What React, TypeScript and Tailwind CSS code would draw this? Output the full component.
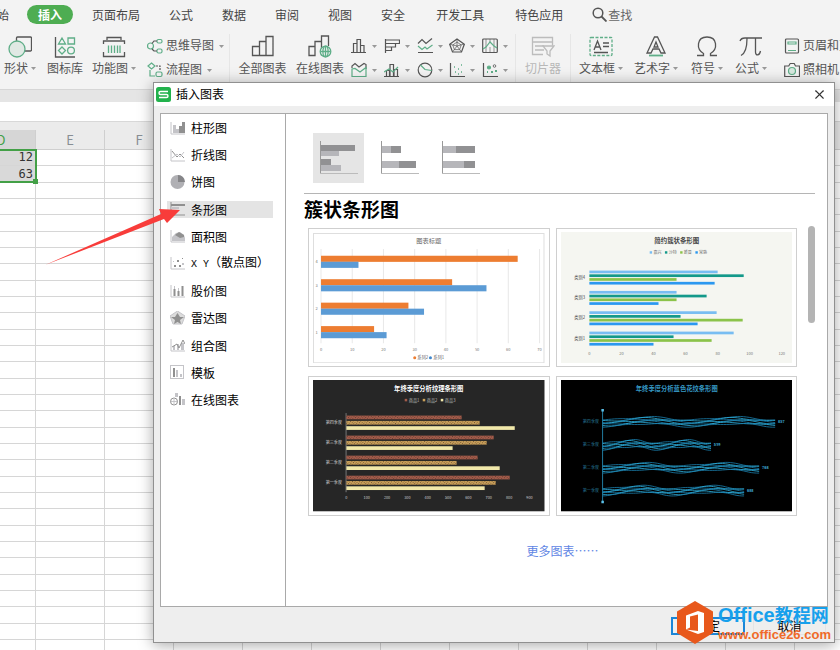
import React from "react";
import { X } from "lucide-react";

const G = "#5fae88";
const K = "#555555";

type Kids = { children: React.ReactNode };

function Big({ children }: Kids) {
  return (
    <svg width="24" height="24" viewBox="0 0 24 24" fill="none" stroke={K} strokeWidth="1.3">
      {children}
    </svg>
  );
}

function Small({ children }: Kids) {
  return (
    <svg width="16" height="16" viewBox="0 0 16 16" fill="none" stroke={K} strokeWidth="1.2" className="shrink-0">
      {children}
    </svg>
  );
}

function Caret() {
  return (
    <svg width="5" height="3" viewBox="0 0 5 3" className="shrink-0">
      <path d="M0 0h5L2.500 3z" fill="#999" />
    </svg>
  );
}

function Tool({ label, width, caret, dim, children }: Kids & { label: string; width: string; caret?: boolean; dim?: boolean }) {
  return (
    <button className={`flex shrink-0 flex-col items-center gap-px whitespace-nowrap ${width} ${dim ? "text-[#b8b8b8]" : "text-[#555]"}`}>
      {children}
      <span className="flex items-center gap-[3px] leading-[18px]">
        {label}
        {caret && <Caret />}
      </span>
    </button>
  );
}

function Row({ label, caret, children }: Kids & { label: string; caret?: boolean }) {
  return (
    <button className="flex h-6 items-center gap-[3px] whitespace-nowrap text-[#555]">
      {children}
      <span className="pb-[2px]">{label}</span>
      {caret && <span className="ml-[2px] flex"><Caret /></span>}
    </button>
  );
}

function Divider() {
  return <div className="h-[50px] w-px shrink-0 bg-[#e6e6e6]" />;
}

const chartIcons: { name: string; art: React.ReactNode }[] = [
  { name: "柱形图", art: <><path d="M0 14.500h15M2.500 14V5.500h3.500V14M6 14V1.500h3.500V14M9.500 7.500H13V14" /></> },
  { name: "条形图", art: <><path d="M1.500 1v14M1.500 2h14v3.500h-14M11.500 5.500V9h-10M7.500 9v3.500h-6" /></> },
  { name: "折线图", art: <><path d="M1 14.500h15M1 5.500l4-4 4 4 6-5" /><path d="M1 8l4 3.500L8 9l2 2 5.500-4" stroke={G} /></> },
  { name: "雷达图", art: <><path d="M8 1l7.300 5.300L12.500 14h-9L.700 6.300z" /><path d="M8 4l4.200 3-1.600 4.600H5.400L3.800 7zM8 1v7l7-2M8 8l4.500 6M8 8l-4.500 6M8 8L1 6.300" strokeWidth=".7" /></> },
  { name: "股价图", art: <><rect x=".700" y="1" width="14.600" height="13.500" rx="1" /><path d="M4 1v13M8 1v3M8 9v5M12 1v13" strokeWidth=".6" /><path d="M1 11l3-2 4-5 4 4 3 2" stroke={G} /></> },
  { name: "面积图", art: <><path d="M1 6V4l3-2.500L8 5l5-3.500 2 1V7" /><path d="M1 7v7.500h14V5.500L9 10 4 6.500z" stroke={G} /></> },
  { name: "组合图", art: <><path d="M0 14.500h15M2.500 14V8.500h3V14M6 14V2.500h3.500V14M10 14V7.500h3.500V14" /><path d="M0 10l5-3 4 3 5-5" stroke={G} /></> },
  { name: "饼图", art: <><circle cx="8" cy="8" r="6.800" /><path d="M3.500 3L8 7.500l6.800 1" stroke={G} /></> },
  { name: "散点图", art: <><path d="M1.500 1v13.500H16" /><path d="M5 5h1M9 7h1M12 3h1M6 10h1M12 10h1M9 12h1" stroke={G} strokeWidth="1.600" /></> },
  { name: "气泡图", art: <><path d="M1.500 1v13.500H16" /><circle cx="7" cy="5.500" r="1.500" fill={G} stroke={G} /><circle cx="12.500" cy="4" r="1.300" strokeWidth=".8" /><path d="M5 10h1M9 10h2M13 9h2" stroke={G} strokeWidth="2" /></> },
];

function Ribbon() {
  return (
    <header className="bg-[#f3f3f3]">
      <nav className="flex h-[29px] items-center gap-[29px] overflow-hidden whitespace-nowrap text-[#444]">
        <button className="-ml-[15px] -mr-[11px]">开始</button>
        <button className="-mr-[10px] h-[19px] rounded-full bg-[#4ead52] px-[11px] font-bold text-white">插入</button>
        <button>页面布局</button>
        <button>公式</button>
        <button>数据</button>
        <button>审阅</button>
        <button>视图</button>
        <button>安全</button>
        <button className="mx-[2px]">开发工具</button>
        <button>特色应用</button>
        <button className="flex items-center gap-px text-[#666]">
          <svg width="15" height="15" viewBox="0 0 15 15" fill="none" stroke="#555" strokeWidth="1.500">
            <circle cx="6" cy="6" r="4.800" />
            <path d="M9.500 9.500l5 5" strokeWidth="1.800" />
          </svg>
          查找
        </button>
      </nav>
      <div className="flex h-[61px] items-start overflow-hidden border-b border-[#d6d6d6] pt-[5px]">
        <Tool label="形状" width="w-[40px]" caret>
          <Big><rect x="8.500" y="3" width="15" height="14" rx="1" /><circle cx="9" cy="15" r="8" fill="#e0e9e4" stroke={G} /></Big>
        </Tool>
        <Tool label="图标库" width="w-[50px]">
          <Big><path d="M2.500 3v20H22" /><g stroke={G}><path d="M9 4l3.500 6h-7zM15 4h6.500v6H15zM9 13l3.500 3.500L9 20l-3.500-3.500z" /><circle cx="18" cy="16.500" r="3.400" /></g></Big>
        </Tool>
        <Tool label="功能图" width="w-[48px]" caret>
          <Big><path d="M5 6V3.500h14V6M1.500 10V7h21v3M1.500 18v4.500h21V18" /><path d="M6.500 11.500V19M9.500 11.500V19M12.500 11.500V19M15.500 11.500V19M18 11.500V19" stroke={G} /></Big>
        </Tool>
        <div className="flex w-[91px] shrink-0 flex-col items-start pl-[9px]">
          <Row label="思维导图" caret>
            <Small><g stroke={G}><circle cx="3.500" cy="8" r="3" /><rect x="10" y="1.500" width="5" height="3.500" rx="1.500" /><rect x="10" y="11" width="5" height="4" rx="1.500" /></g><path d="M5 5.500L7 3h3M5 11l2 2h3" /></Small>
          </Row>
          <Row label="流程图" caret>
            <Small><g stroke={G}><path d="M4.500 1l3.500 3-3.500 3L1 4z" /><rect x="9" y="10" width="6" height="4.500" rx="1.500" /><path d="M3 8v6h5" /></g><path d="M9 4h4v5" strokeDasharray="2 1" /></Small>
          </Row>
        </div>
        <Divider />
        <Tool label="全部图表" width="w-[65px]">
          <Big><path d="M1.500 21.500v-9h7v9zM8.500 21.500v-14h6.500v14zM15 21.500v-19h7v19z" /></Big>
        </Tool>
        <Tool label="在线图表" width="w-[50px]">
          <Big><path d="M1 21.500v-9h6v9zM7 21.500v-14h6.500v14M13.500 11v-9h7v10" /><g stroke={G}><circle cx="17.500" cy="17.500" r="5.300" fill="#f3f3f3" /><path d="M12.500 17.500h10M17.500 12.500v10" /><ellipse cx="17.500" cy="17.500" rx="2.600" ry="5.300" /></g></Big>
        </Tool>
        <div className="grid w-[170px] shrink-0 grid-cols-5 pl-[6px]">
          {chartIcons.map((c) => (
            <button key={c.name} aria-label={c.name} className="flex h-6 items-center gap-[5px]">
              <Small>{c.art}</Small>
              <Caret />
            </button>
          ))}
        </div>
        <Divider />
        <Tool label="切片器" width="w-[54px]" dim>
          <Big><g stroke="#bcbcbc"><path d="M12 20.500H1.500v-17h20v8M1.500 8h20M4 12h9M4 16h9" /><path d="M12 12h11l-4 5v5l-3-2v-3z" /></g></Big>
        </Tool>
        <Divider />
        <Tool label="文本框" width="w-[60px]" caret>
          <Big><rect x="1" y="3.500" width="22" height="18" rx="1" stroke={G} strokeDasharray="3 1.500" /><path d="M5 16l3.500-9L12 16M6 13h5M14 9h6M14 12.500h6M5 18.500h14" /></Big>
        </Tool>
        <Tool label="艺术字" width="w-[50px]" caret>
          <Big><path d="M10.500 3h3L21 19h-4l-2-4H9l-2 4H3zM12 8l-2 5h4z" /><path d="M5 21.500h14" stroke={G} strokeWidth="1.800" /></Big>
        </Tool>
        <Tool label="符号" width="w-[52px]" caret>
          <Big><path d="M2 21.500h6.500v-2C1 15 1.500 3 12 3s11 12 3.500 16.500v2H22" /></Big>
        </Tool>
        <Tool label="公式" width="w-[36px]" caret>
          <Big><path d="M1 7c1-3 3-3 5-3h17M8 4.500C8 12 7 19 2 21.500M16.500 4.500V18c0 4 4 4 5-1" /></Big>
        </Tool>
        <div className="flex shrink-0 flex-col items-start pl-[15px]">
          <Row label="页眉和页脚">
            <Small><rect x="1.500" y="1" width="13" height="14" rx="1" /><path d="M4 4h8v2H4zM4 12.500h8" stroke={G} /></Small>
          </Row>
          <Row label="照相机">
            <Small><path d="M.700 4h4l1.500-2.500h4L11.500 4h4v10.500H.700z" /><circle cx="8" cy="9" r="3.500" stroke={G} fill="#d7e8df" /></Small>
          </Row>
        </div>
      </div>
    </header>
  );
}

const columns = ["D", "E", "F", "G", "H", "I", "J", "K", "L", "M", "N", "O", "P"];
const rowHeights = ["h-[16px]", "h-[17px]", "h-[16px]"];
const values = ["12", "63"];

function Sheet() {
  return (
    <div className="relative bg-white">
      <div className="h-[12px] bg-[#e5e5e5]" />
      <div className="h-[20px] border-b border-[#d8d8d8] bg-white" />
      <div className="h-[8px] bg-[#ebebeb]" />
      <table className="-ml-[33px] w-[897px] table-fixed border-separate border-spacing-0">
        <thead>
          <tr>
            {columns.map((c) => (
              <th
                key={c}
                className={`h-[20px] border-b border-r border-[#cfcfcf] p-0 text-[13px] leading-[18px] font-normal ${c === "D" ? "bg-[#d6d6d6] text-[#43a047]" : "bg-[#ebebeb] text-[#888e94]"}`}
              >
                {c}
              </th>
            ))}
          </tr>
        </thead>
        <tbody className="font-['DejaVu_Sans_Mono',monospace] text-[12px] leading-[15px] text-[#333]">
          {Array.from({ length: 33 }, (_, r) => (
            <tr key={r}>
              {columns.map((c, i) => (
                <td key={c} className={`border-b border-r border-[#d6d6d6] p-0 pr-[2px] text-right ${rowHeights[r % 3]} ${i === 0 && r < 2 ? "bg-[#d9d9d9]" : ""}`}>
                  {i === 0 ? values[r] : ""}
                </td>
              ))}
            </tr>
          ))}
        </tbody>
      </table>
      <div className="absolute -left-[33px] top-[59px] h-[34px] w-[70px] border-2 border-[#43a047]">
        <div className="absolute -bottom-[3px] -right-[3px] size-[5px] bg-[#43a047]" />
      </div>
    </div>
  );
}

const A = "#c4c4c8";
const B = "#909090";

const kinds: { name: string; art: React.ReactNode; spaced?: boolean }[] = [
  { name: "柱形图", art: <><path d="M1 1v12h14" stroke={A} /><path d="M3 4h3v8H3zM6 8h3v4H6z" fill={A} /><path d="M9 5h3v7H9zM12 1h3v11h-3z" fill={B} /></> },
  { name: "折线图", art: <><path d="M1 1v12h14" stroke={A} /><path d="M2 3l5 6 3-3 4 4" stroke={B} /><path d="M2 10l5-4 3 3 4-5" stroke={A} /></> },
  { name: "饼图", art: <><circle cx="7.500" cy="7" r="7" fill="#b0b0b4" /><path d="M8 7V0a7 7 0 0 1 7 7z" fill="#858588" /></> },
  { name: "条形图", art: <><path d="M1 0v13h14" stroke={B} /><path d="M1 2h14v2H1z" fill={B} /><path d="M1 5h8v2H1zM1 9h6v2H1z" fill={A} /></> },
  { name: "面积图", art: <><path d="M1 1v12h14" stroke={A} /><path d="M2 12V8l4-4 4-1 4 3 1 3v3z" fill={A} /><path d="M5 6l4-3 5 3v2l-4 1z" fill={B} /></> },
  { name: "X Y（散点图）", spaced: true, art: <><path d="M1 1v12h14" stroke={A} /><path d="M4 9h2v2H4zM7 4h2v2H7zM12 2h1v1h-1zM9 9h2v2H9z" fill={B} /><path d="M3 5h1v1H3zM12 7h2v2h-2z" fill={A} /></> },
  { name: "股价图", art: <><path d="M1 1v12h14" stroke={A} /><path d="M4.500 5v7M8.500 7v5M12.500 2v10" stroke={B} strokeWidth="2" /><path d="M4.500 2v3M8.500 4v3" stroke={A} /></> },
  { name: "雷达图", art: <><path d="M7.500 0L15 5l-3 8H3L0 5z" fill="#dcdcdc" stroke={A} /><path d="M7.500 2L10 6l4 0-4 3 1 4-3.500-2L4 13l1-4-4-3h4z" fill={B} /></> },
  { name: "组合图", art: <><path d="M1 1v12h14" stroke={A} /><path d="M3 8h2v4H3zM7 6h2v6H7zM11 5h3v7h-3z" fill={A} /><path d="M2 9l5-3 2 4 4-8 2 4" stroke={B} /></> },
  { name: "模板", art: <><rect x=".500" y=".500" width="13" height="13" stroke={A} /><path d="M3 3h2v9H3z" fill={B} /><path d="M6 5h2v7H6zM10 9h2v3h-2z" fill={A} /></> },
  { name: "在线图表", art: <><circle cx="4" cy="9.500" r="3.500" stroke={B} /><path d="M1 9.500h6M4 6v7" stroke={A} /><path d="M5 1h3v4H5zM12 7h3v6h-3z" fill={A} /><path d="M9 4h2v9H9z" fill={B} /></> },
];

function Kinds() {
  return (
    <ul className="flex h-[289px] w-[124px] shrink-0 flex-col justify-between pl-[6px] text-black">
      {kinds.map((k) => (
        <li key={k.name}>
          <button className={`flex h-[17px] w-[106px] items-center gap-[6px] whitespace-nowrap pl-[3px] leading-[17px] ${k.name === "条形图" ? "bg-[#e4e4e4]" : ""}`}>
            <svg width="15" height="14" viewBox="0 0 15 14" fill="none" className="shrink-0">{k.art}</svg>
            {k.spaced ? (
              <span><span className="font-['Liberation_Mono',monospace] text-[10px]">X Y</span>（散点图）</span>
            ) : (
              <span>{k.name}</span>
            )}
          </button>
        </li>
      ))}
    </ul>
  );
}

const subtypes = [
  { name: "簇状条形图", light: [[0, 10, 18, 5], [0, 24, 20, 6]], dark: [[0, 4, 34, 6], [0, 18, 10, 6]] },
  { name: "堆积条形图", light: [[0, 5, 9, 7], [0, 20, 17, 7]], dark: [[9, 5, 10, 7], [17, 20, 17, 7]] },
  { name: "百分比堆积条形图", light: [[0, 5, 13, 7], [0, 20, 21, 7]], dark: [[13, 5, 19, 7], [21, 20, 11, 7]] },
];

function Subtypes() {
  return (
    <div className="flex gap-[10px] pl-[9px]">
      {subtypes.map((s, i) => (
        <button key={s.name} aria-label={s.name} className={`flex h-[50px] w-[51px] items-center justify-center ${i === 0 ? "bg-[#e5e5e5]" : ""}`}>
          <svg width="38" height="34" viewBox="0 0 38 34">
            {s.light.map((b, j) => <rect key={j} x={b[0] + 1} y={b[1]} width={b[2]} height={b[3]} fill="#b6b6ba" />)}
            {s.dark.map((b, j) => <rect key={j} x={b[0] + 1} y={b[1]} width={b[2]} height={b[3]} fill="#919193" />)}
            <path d="M.500 0v33" stroke="#999" />
            <path d="M0 32.500h38" stroke="#bbb" />
          </svg>
        </button>
      ))}
    </div>
  );
}

function Card({ name, children }: Kids & { name: string }) {
  return (
    <button aria-label={name} className="block border border-[#cfcfcf] bg-white px-[4px] py-[3px]">
      <svg viewBox="0 0 231 131" className="block w-full">{children}</svg>
    </button>
  );
}

function ClusteredChart() {
  const data = [[63, 12], [42, 53], [28, 33], [17, 21]];
  return (
    <Card name="图表标题">
      <rect x=".500" y="1.500" width="230" height="129" fill="#fff" stroke="#dedede" />
      <text x="115.500" y="10.500" fontSize="6.200" textAnchor="middle" fill="#666">图表标题</text>
      {[0, 1, 2, 3, 4, 5, 6, 7].map((t) => (
        <g key={t}>
          <path d={`M${8 + t * 31.15} 17v94`} stroke="#e2e2e2" strokeWidth=".8" />
          <text x={8 + t * 31.15} y="118.500" fontSize="4" textAnchor="middle" fill="#777">{t * 10}</text>
        </g>
      ))}
      {data.map((d, i) => (
        <g key={i}>
          <rect x="8" y={23.7 + i * 23.4} width={d[0] * 3.115} height="6.100" fill="#ed7d31" />
          <rect x="8" y={29.7 + i * 23.4} width={d[1] * 3.115} height="6.100" fill="#5b9bd5" />
          <text x="3.500" y={31.2 + i * 23.4} fontSize="4" textAnchor="middle" fill="#777">{4 - i}</text>
        </g>
      ))}
      <circle cx="101.500" cy="125.500" r="1.500" fill="#ed7d31" />
      <text x="104" y="127" fontSize="4.300" fill="#666">系列2</text>
      <circle cx="117.200" cy="125.500" r="1.500" fill="#3f86cc" />
      <text x="120" y="127" fontSize="4.300" fill="#666">系列1</text>
    </Card>
  );
}

function SimpleChart() {
  const colors = ["#78bdf2", "#13998a", "#8bc34a", "#2b98f0"];
  const data = [[128, 154, 87, 125], [87, 117, 87, 69], [127, 91, 153, 108], [144, 84, 122, 64]];
  const names = ["嘉兴", "沙特", "新晋", "常熟"];
  return (
    <Card name="简约簇状条形图">
      <rect width="231" height="131" fill="#f5f6f1" />
      <text x="115.500" y="10.500" fontSize="6.400" fontWeight="bold" textAnchor="middle" fill="#444">简约簇状条形图</text>
      {names.map((n, i) => (
        <g key={n}>
          <rect x={88.500 + i * 15.2} y="19.200" width="2.400" height="2.400" fill={colors[i]} />
          <text x={92.2 + i * 15.2} y="22" fontSize="4" fill="#666">{n}</text>
        </g>
      ))}
      {data.map((g, r) => (
        <g key={r}>
          {g.map((w, i) => <rect key={i} x="28.300" y={38.500 + r * 20.3 + i * 3.750} width={w} height="2.700" fill={colors[i]} />)}
          <text x="24" y={46.7 + r * 20.3} fontSize="4.200" textAnchor="end" fill="#444">{`类别${4 - r}`}</text>
        </g>
      ))}
      {[0, 20, 40, 60, 80, 100, 120].map((t) => (
        <text key={t} x={28.3 + t * 1.6} y="122.700" fontSize="4" textAnchor="middle" fill="#777">{t}</text>
      ))}
    </Card>
  );
}

const quarters = ["第四季度", "第三季度", "第二季度", "第一季度"];

function TextureChart() {
  const colors = ["#a35c4b", "#c9a05a", "#f1e8aa"];
  const data = [[115, 133, 168], [147, 140, 106], [131, 110, 153], [163, 149, 138]];
  return (
    <Card name="年终季度分析纹理条形图">
      <defs>
        <pattern id="dots" width="2" height="2" patternUnits="userSpaceOnUse" patternTransform="rotate(35)">
          <rect width=".900" height=".900" fill="#3a211b" opacity=".6" />
        </pattern>
      </defs>
      <rect width="231" height="131" fill="#262626" />
      <text x="115.500" y="11" fontSize="6.300" fontWeight="bold" textAnchor="middle" fill="#fff">年终季度分析纹理条形图</text>
      {colors.map((c, i) => (
        <g key={c}>
          <rect x={91.500 + i * 18} y="18.800" width="2.500" height="2.500" fill={c} />
          <text x={95.500 + i * 18} y="21.700" fontSize="4.200" fill="#bbb">{`商品${i + 1}`}</text>
        </g>
      ))}
      <path d="M33 33v79" stroke="#aaa" strokeWidth=".6" />
      {data.map((g, r) => (
        <g key={r}>
          {g.map((w, i) => (
            <g key={i}>
              <rect x="33.300" y={35.500 + r * 20 + i * 5.3} width={w} height="3.700" fill={colors[i]} />
              {i < 2 && <rect x="33.300" y={35.500 + r * 20 + i * 5.3} width={w} height="3.700" fill="url(#dots)" />}
            </g>
          ))}
          <text x="29" y={44 + r * 20} fontSize="4.100" textAnchor="end" fill="#ccc">{quarters[r]}</text>
        </g>
      ))}
      {[0, 1, 2, 3, 4, 5, 6, 7, 8, 9].map((t) => (
        <text key={t} x={33.3 + t * 20.3} y="118.300" fontSize="3.800" textAnchor="middle" fill="#ccc">{t * 100}</text>
      ))}
    </Card>
  );
}

// One strand of a woven bar: a sampled wave, kept inside the bar's ten units of height.
function strand(width: number, mid: number, n: number) {
  let d = "";
  for (let s = 0; s <= 60; s++) {
    const t = s / 60;
    const wave = Math.sin(t * Math.PI * 4 - 1.7) * 1.5 + Math.sin(t * Math.PI * 8 + n * 1.9) * 0.7;
    const y = mid - 3.3 + n * 1.1 - wave;
    d += `${s ? "L" : "M"}${(41.7 + t * width).toFixed(1)} ${y.toFixed(1)}`;
  }
  return d;
}

function WaveChart() {
  const data = [
    { w: 172, mid: 41.7, v: 857 },
    { w: 108, mid: 64.7, v: 539 },
    { w: 156, mid: 87.5, v: 768 },
    { w: 141, mid: 110.3, v: 688 },
  ];
  return (
    <Card name="年终季度分析蓝色花纹条形图">
      <rect width="231" height="131" fill="#000" />
      <text x="115.500" y="11" fontSize="6.300" fontWeight="bold" textAnchor="middle" fill="#3698c4">年终季度分析蓝色花纹条形图</text>
      <path d="M41.500 30v92" stroke="#2588b0" strokeWidth=".9" />
      <path d="M40.300 29h2.500v2.500h-2.500zM40.300 120.500h2.500v2.500h-2.500z" fill="#5cc0e8" />
      {data.map((b, r) => (
        <g key={b.v}>
          {[0, 1, 2, 3, 4, 5, 6].map((n) => (
            <path key={n} d={strand(b.w, b.mid, n)} fill="none" stroke={n % 2 ? "#2fb0dc" : "#1a7fae"} strokeWidth=".8" />
          ))}
          <text x="38" y={b.mid + 1.500} fontSize="4.100" textAnchor="end" fill="#267595">{quarters[r]}</text>
          <text x={44.500 + b.w} y={b.mid + 1.500} fontSize="3.800" fontWeight="bold" fill="#3fa8d0">{b.v}</text>
        </g>
      ))}
    </Card>
  );
}

function Watermark() {
  return (
    <div className="absolute -bottom-[2px] right-0 flex items-center gap-[5px] whitespace-nowrap">
      <svg width="36" height="43" viewBox="0 0 36 43">
        <path d="M18 0l18 10.500v21.500L18 43 0 32V10.500z" fill="#e8581c" />
        <path d="M9 14.500l12-4.500 6 2v19l-6 2-12-4.500 12 1.500V13.500l-8 2v11L9 28.500z" fill="#fff" />
      </svg>
      <div className="flex w-[116px] flex-col">
        <span className="font-['Liberation_Sans','Noto_Sans_CJK_SC',sans-serif] text-[20px] font-bold leading-[22px] text-[#16a0ec]">
          Office<span className="text-[18px]">教程网</span>
        </span>
        <span className="font-['Liberation_Sans',sans-serif] text-[13px] font-bold leading-[15px] text-[#f06a28]">www.office26.com</span>
      </div>
    </div>
  );
}

function InsertChartDialog() {
  return (
    <section role="dialog" aria-label="插入图表" className="absolute left-[153px] right-[5px] top-[82px] flex h-[561px] flex-col border border-[#909090] bg-[#eeeeee] shadow-[0_2px_14px_rgba(0,0,0,0.35)]">
      <div className="flex h-[23px] shrink-0 items-center bg-white pb-px pl-[2px] pr-[7px] text-black">
        <svg width="15" height="15" viewBox="0 0 15 15" fill="none">
          <rect width="15" height="15" rx="2.500" fill="#22b24c" />
          <path d="M12 4.500H4.500Q3 4.500 3 6t1.500 1.500h6Q12 7.500 12 9t-1.500 1.500H3" stroke="#fff" strokeWidth="1.400" />
        </svg>
        <h1 className="ml-[5px] flex-1 pb-px">插入图表</h1>
        <button aria-label="关闭"><X size={15} strokeWidth={1.8} color="#333" /></button>
      </div>
      <div className="mx-[6px] mt-[7px] flex min-h-0 flex-1 border border-[#a9a9a9] bg-white">
        <div className="border-r border-[#a9a9a9] pt-[5px]"><Kinds /></div>
        <div className="flex min-w-0 flex-1 flex-col pl-[18px] pr-[12px] pt-[19px]">
          <Subtypes />
          <hr className="mt-[10px] border-[#b5b5b5]" />
          <h2 className="mt-[2px] h-[30px] font-['Liberation_Serif','Noto_Sans_CJK_SC',serif] text-[19px] font-bold leading-[30px] text-black">簇状条形图</h2>
          <div className="flex items-start">
            <div className="ml-[4px] mr-[11px] mt-[2px] grid flex-1 grid-cols-2 gap-x-[6px] gap-y-[9px]">
              <ClusteredChart />
              <SimpleChart />
              <TextureChart />
              <WaveChart />
            </div>
            <div className="h-[97px] w-[7px] shrink-0 rounded-full bg-[#b4b4b4]" />
          </div>
          <a href="#more" className="mt-[26px] self-center pl-[6px] leading-[18px] text-[#5f86e4]">更多图表……</a>
        </div>
      </div>
      <footer className="relative flex h-[35px] shrink-0 items-center justify-end gap-[8px] pr-[8px] pt-[3px] text-black">
        <button className="h-[18px] w-[74px] border-2 border-[#1b86d8] bg-[#f0f0f0] leading-[14px]">确定</button>
        <button className="h-[18px] w-[73px] border border-[#e4e4e4] leading-[16px]">取消</button>
        <Watermark />
      </footer>
    </section>
  );
}

export default function App() {
  return (
    <main className="relative h-screen overflow-hidden bg-white font-['Noto_Sans_CJK_SC',sans-serif] text-[12px] leading-[18px]">
      <Ribbon />
      <Sheet />
      <InsertChartDialog />
      <svg width="140" height="60" viewBox="0 0 140 60" className="pointer-events-none absolute left-[45px] top-[207px]">
        <path d="M0 58L116 7l-2-5 21 1-13 13-3-4z" fill="#f83c3a" />
      </svg>
    </main>
  );
}
